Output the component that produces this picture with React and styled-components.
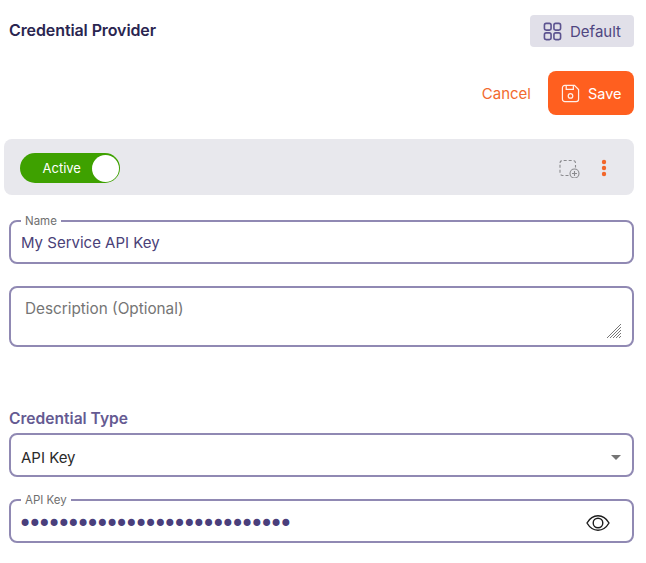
import React from 'react';
import styled, { createGlobalStyle } from 'styled-components';

const GlobalStyle = createGlobalStyle`
  html, body {
    margin: 0;
    padding: 0;
    background: #fff;
    font-family: 'Inter', 'Roboto', sans-serif;
  }
`;

const Page = styled.div`
  width: 646px;
  height: 563px;
  box-sizing: border-box;
  padding: 15px 12px 0 4px;
  overflow: hidden;
`;

const Header = styled.div`
  display: flex;
  justify-content: space-between;
  align-items: center;
  padding-left: 5px;
  height: 32px;
`;

const Title = styled.h1`
  margin: -2px 0 0;
  font-size: 16px;
  font-weight: 600;
  letter-spacing: -0.1px;
  color: #2a2550;
`;

const DefaultButton = styled.div`
  display: flex;
  align-items: center;
  gap: 8px;
  width: 104px;
  height: 32px;
  box-sizing: border-box;
  padding-left: 13px;
  border-radius: 4px;
  background: #e1e0e9;
  color: #4f4680;
  font-size: 15px;
`;

const Actions = styled.div`
  display: flex;
  justify-content: flex-end;
  align-items: center;
  gap: 17px;
  margin-top: 24px;
`;

const CancelLink = styled.span`
  color: #f26a2e;
  font-size: 15px;
`;

const SaveButton = styled.div`
  display: flex;
  align-items: center;
  gap: 8px;
  width: 86px;
  height: 44px;
  box-sizing: border-box;
  padding-left: 13px;
  border-radius: 8px;
  background: #ff5f1f;
  color: #fff;
  font-size: 14.5px;
`;

const StatusBar = styled.div`
  display: flex;
  justify-content: space-between;
  align-items: center;
  height: 56px;
  box-sizing: border-box;
  margin-top: 24px;
  padding: 2px 27px 0 16px;
  border-radius: 8px;
  background: #e8e8ed;
`;

const Toggle = styled.div`
  display: flex;
  align-items: center;
  justify-content: space-between;
  width: 100px;
  height: 30px;
  box-sizing: border-box;
  padding: 0 1.5px 0 22.5px;
  border-radius: 15px;
  background: #3ea100;
  color: #fff;
  font-size: 13px;
`;

const Knob = styled.span`
  width: 27px;
  height: 27px;
  border-radius: 50%;
  background: #fff;
`;

const BarIcons = styled.div`
  display: flex;
  align-items: center;
  gap: 20px;
`;

const Fields = styled.div`
  display: flex;
  flex-direction: column;
  padding-left: 5px;
`;

const Outlined = styled.div`
  position: relative;
  display: flex;
  align-items: ${({ $top }) => ($top ? 'flex-start' : 'center')};
  justify-content: space-between;
  height: ${({ $height }) => $height}px;
  margin-top: ${({ $gap }) => $gap}px;
  box-sizing: border-box;
  padding: ${({ $top }) => ($top ? '11px 14px' : '0 10px')};
  border: 2px solid #9089b3;
  border-radius: 8px;
  background: #fff;
`;

const FloatLabel = styled.span`
  position: absolute;
  top: -8px;
  left: 10px;
  padding: 0 4px;
  background: #fff;
  color: #6f6f6f;
  font-size: 11.5px;
  line-height: 14px;
`;

const Value = styled.span`
  color: ${({ $dark }) => ($dark ? '#2b2b2b' : '#4a4178')};
  font-size: 15px;
  line-height: 20px;
  margin-top: ${({ $dark }) => ($dark ? 6 : 1)}px;
`;

const Placeholder = styled.span`
  color: #757575;
  font-size: 15.3px;
  line-height: 20px;
`;

const Grip = styled.svg`
  position: absolute;
  right: 10px;
  bottom: 6px;
`;

const SectionLabel = styled.div`
  margin-top: 62px;
  color: #655a92;
  font-size: 15.6px;
  font-weight: 600;
  line-height: 20px;
`;

const Caret = styled.span`
  width: 0;
  height: 0;
  margin: 4px 1px 0 0;
  border-left: 5px solid transparent;
  border-right: 5px solid transparent;
  border-top: 5px solid #757575;
`;

const Dots = styled.span`
  color: #4a3f7c;
  font-family: 'DejaVu Sans', sans-serif;
  font-size: 24px;
  line-height: 20px;
  letter-spacing: -4.5px;
  margin-top: 6px;
  margin-left: -3px;
`;

const EyeButton = styled.span`
  display: flex;
  margin-right: 12px;
  margin-top: 4px;
`;

const GridIcon = () => (
  <svg width="19" height="19" viewBox="0 0 20 20" fill="none" stroke="#5c5390" strokeWidth="1.7">
    <rect x="1.5" y="1.5" width="7" height="7" rx="1.8" />
    <rect x="11.5" y="1.5" width="7" height="7" rx="1.8" />
    <rect x="1.5" y="11.5" width="7" height="7" rx="1.8" />
    <rect x="11.5" y="11.5" width="7" height="7" rx="1.8" />
  </svg>
);

const SaveIcon = () => (
  <svg width="19" height="19" viewBox="0 0 20 20" fill="none" stroke="#fff" strokeWidth="1.3" opacity="0.9">
    <path d="M4 1.5h10.2l4.3 4.3V16a2.5 2.5 0 0 1-2.5 2.5H4A2.5 2.5 0 0 1 1.5 16V4A2.5 2.5 0 0 1 4 1.5z" />
    <path d="M5.5 1.5v4.2h7.5V1.5" />
    <circle cx="10" cy="12.5" r="2.4" />
  </svg>
);

const AddDashedIcon = () => (
  <svg width="22" height="20" viewBox="0 -1.5 22 20" fill="none" stroke="#8a8a8e" strokeWidth="1.1">
    <path d="M1 3.5A2.5 2.5 0 0 1 3.5 1h11A2.5 2.5 0 0 1 16.5 3.5V8M9.5 16H3.5A2.5 2.5 0 0 1 1 13.5V3.5" strokeDasharray="3 2" />
    <circle cx="15.5" cy="14" r="4.5" />
    <path d="M15.5 11.5v5M13 14h5" />
  </svg>
);

const MoreIcon = () => (
  <svg width="6" height="18" viewBox="0 0 6 18" fill="#f2662a">
    <circle cx="3" cy="3" r="2.2" />
    <circle cx="3" cy="9" r="2.2" />
    <circle cx="3" cy="15" r="2.2" />
  </svg>
);

const EyeIcon = () => (
  <svg width="24" height="18" viewBox="0 0 24 18" fill="none" stroke="#1c1c1c" strokeWidth="1.4">
    <path d="M1 9C3.8 4.2 7.6 1.8 12 1.8S20.2 4.2 23 9c-2.8 4.8-6.6 7.2-11 7.2S3.8 13.8 1 9z" />
    <circle cx="12" cy="9" r="4.8" />
  </svg>
);

const GripIcon = () => (
  <Grip width="16" height="16" viewBox="0 0 16 16" stroke="#777" strokeWidth="1">
    <path d="M1 15L15 1M4 15L15 4M7 15l8-8M10 15l5-5M13 15l2-2" />
  </Grip>
);

const App = () => (
  <>
    <GlobalStyle />
    <Page>
      <Header>
        <Title>Credential Provider</Title>
        <DefaultButton>
          <GridIcon />
          Default
        </DefaultButton>
      </Header>

      <Actions>
        <CancelLink>Cancel</CancelLink>
        <SaveButton>
          <SaveIcon />
          Save
        </SaveButton>
      </Actions>

      <StatusBar>
        <Toggle>
          Active
          <Knob />
        </Toggle>
        <BarIcons>
          <AddDashedIcon />
          <MoreIcon />
        </BarIcons>
      </StatusBar>

      <Fields>
        <Outlined $height={44} $gap={25}>
          <FloatLabel>Name</FloatLabel>
          <Value>My Service API Key</Value>
        </Outlined>

        <Outlined $height={61} $gap={22} $top>
          <Placeholder>Description (Optional)</Placeholder>
          <GripIcon />
        </Outlined>

        <SectionLabel>Credential Type</SectionLabel>

        <Outlined $height={44} $gap={4}>
          <Value $dark>API Key</Value>
          <Caret />
        </Outlined>

        <Outlined $height={44} $gap={22}>
          <FloatLabel>API Key</FloatLabel>
          <Dots>{'•'.repeat(28)}</Dots>
          <EyeButton>
            <EyeIcon />
          </EyeButton>
        </Outlined>
      </Fields>
    </Page>
  </>
);

export default App;
